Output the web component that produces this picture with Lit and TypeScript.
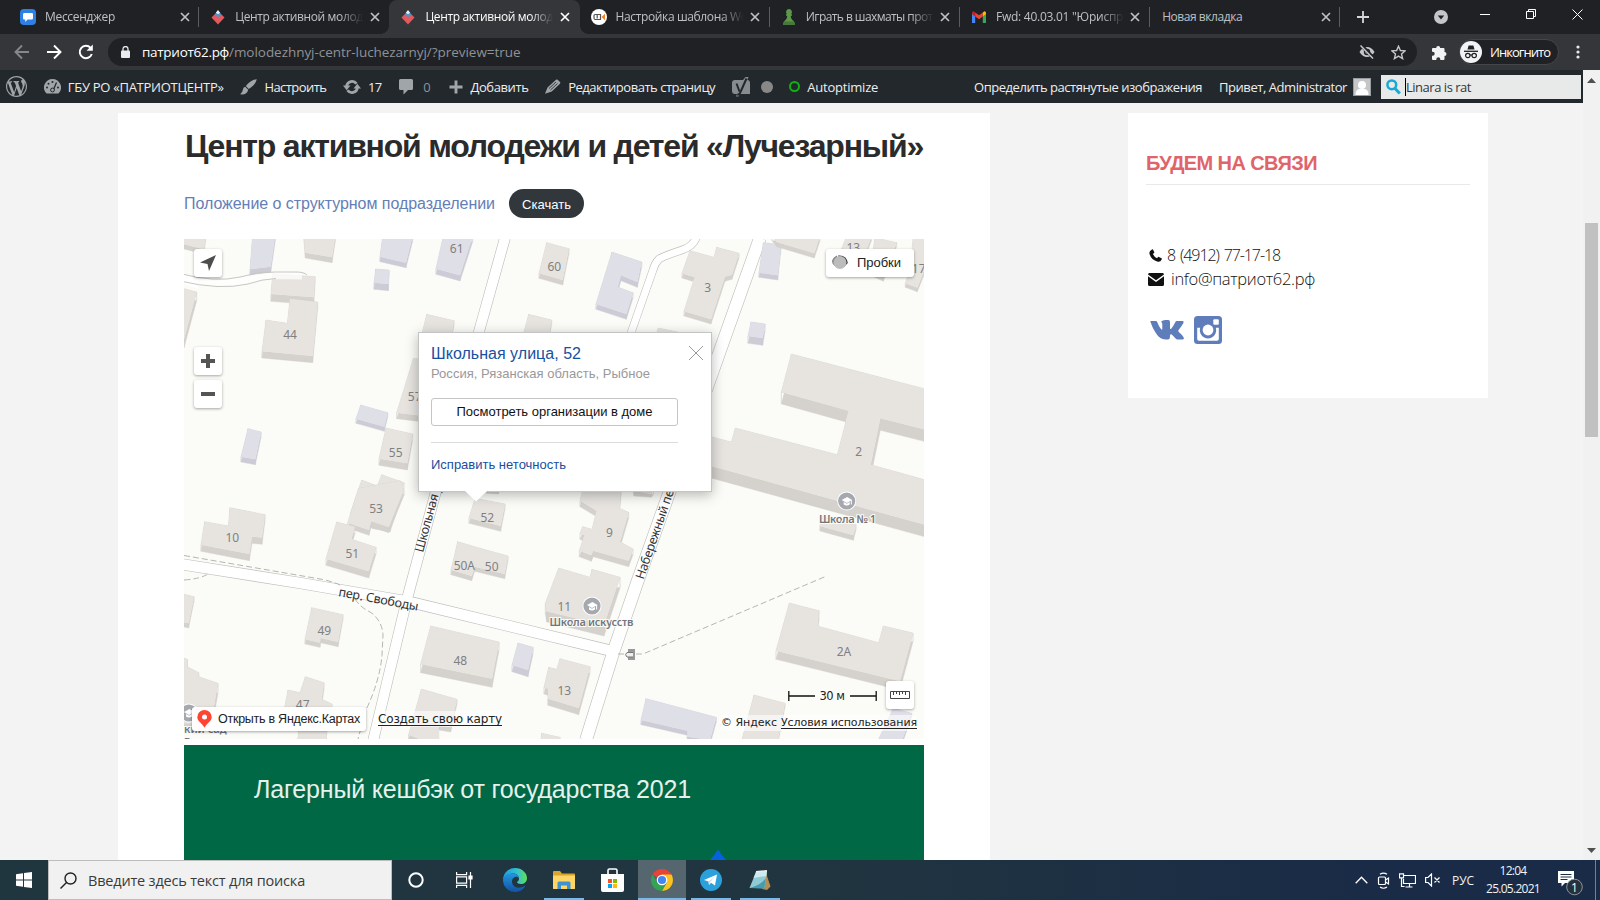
import { LitElement, html, svg, css } from "lit";
import { customElement, property } from "lit/decorators.js";
import { classMap } from "lit/directives/class-map.js";

/** A single line of text whose tracking is adjusted so that it spans a given width. */
@customElement("fit-text")
class FitText extends LitElement {
  @property({ type: Number }) w = 0;
  static styles = css`
    :host { display: inline-block; white-space: nowrap; flex: none; }
    span { display: inline-block; text-decoration: inherit; text-underline-offset: inherit; }
  `;
  render() {
    return html`<span><slot></slot></span>`;
  }
  firstUpdated() {
    const span = this.renderRoot.querySelector("span") as HTMLElement;
    const natural = span.getBoundingClientRect().width;
    const count = (this.textContent || "").trim().length || 1;
    if (this.w) {
      span.style.letterSpacing = `${(this.w - natural) / count}px`;
      this.style.width = `${this.w}px`;
    }
  }
}

/* ---------- browser tabs ---------- */
const closeX = html`<svg class="x" width="10" height="10" viewBox="0 0 10 10"><path d="M1 1L9 9M9 1L1 9" stroke="currentColor" stroke-width="1.7" /></svg>`;

const favChat = html`<svg width="16" height="16" viewBox="0 0 16 16"><rect width="16" height="16" rx="4" fill="#2f80e4"/><path d="M4.5 4h7.2q1.3 0 1.3 1.3v4q0 1.3-1.3 1.3H7.5L5.3 13v-2.4H4.4Q3 10.600 3 9.300v-4Q3 4 4.500 4z" fill="#fff"/></svg>`;
const favPatriot = html`<svg width="16" height="16" viewBox="0 0 16 16"><path d="M1.500 8.500L8 2l6.500 6.500L8 15.500z" fill="#e25a60"/><path d="M4.700 5.500L8 2l3.300 3.500L8 8.300z" fill="#4f93c8"/><path d="M5.800 3.800L8 1l2.200 2.800L8 5.300z" fill="#dfeffa"/></svg>`;
const favCm = html`<svg width="16" height="16" viewBox="0 0 16 16"><circle cx="8" cy="8" r="8" fill="#fff"/><path d="M6.500 5.500H4.200Q3 5.500 3 7v2q0 1.500 1.200 1.500h5.300v-5H6.200v4" fill="none" stroke="#555" stroke-width="1.200"/><path d="M10.500 8L14 4.800v6.400z" fill="#f5821f"/></svg>`;
const favPawn = html`<svg width="16" height="16" viewBox="0 0 16 16"><path d="M8 0a3 3 0 0 1 2 5.200h1v1.500H9.800c0 2 .6 3.300 2.700 5.300 1.200 1.200 1.300 2.500 1.300 4H2.200c0-1.500.1-2.800 1.300-4 2.100-2 2.700-3.300 2.700-5.300H5V5.200h1A3 3 0 0 1 8 0z" fill="#5d9948"/><path d="M2.200 16c0-1.500.1-2.500 1-3.600h9.600c.9 1.100 1 2.100 1 3.600z" fill="#46793a"/></svg>`;
const favGmail = html`<svg width="16" height="16" viewBox="0 0 16 16"><path d="M1 14V4.500L4.200 7v7z" fill="#4285f4"/><path d="M11.800 14V7L15 4.500V14z" fill="#34a853"/><path d="M1 5V3.800Q1 2.200 2.600 2.200L4.200 3.400V7.400z" fill="#c5221f"/><path d="M4.200 3.400L8 6.300l3.800-2.900v4L8 10.300 4.200 7.400z" fill="#ea4335"/><path d="M11.800 3.400l1.600-1.200Q15 2.200 15 3.800V5l-3.200 2.400z" fill="#fbbc04"/></svg>`;

const tabs = [
  { icon: favChat, text: "Мессенджер", w: 70 },
  { icon: favPatriot, text: "Центр активной молоде", w: 134 },
  { icon: favPatriot, text: "Центр активной молоде", w: 134, active: true },
  { icon: favCm, text: "Настройка шаблона Wo", w: 132 },
  { icon: favPawn, text: "Играть в шахматы проти", w: 134 },
  { icon: favGmail, text: 'Fwd: 40.03.01 "Юриспру', w: 133 },
  { icon: null, text: "Новая вкладка", w: 80 },
];

/* ---------- admin bar icons ---------- */
const G = "#a0a5aa";
const icWp = html`<svg width="21" height="21" viewBox="0 0 20 20"><path fill=${G} d="M20 10c0-5.510-4.490-10-10-10S0 4.490 0 10s4.490 10 10 10 10-4.490 10-10zM7.780 15.370L4.370 6.220c.55-.02 1.170-.08 1.170-.08.500-.06.440-1.130-.06-1.110 0 0-1.450.11-2.370.11-.18 0-.37 0-.58-.01C4.120 2.690 6.870 1.110 10 1.110c2.330 0 4.450.87 6.050 2.340-.68-.11-1.650.39-1.650 1.580 0 .740.450 1.360.9 2.100.35.610.550 1.360.550 2.460 0 1.490-1.400 5-1.400 5l-3.030-8.370c.540-.02.820-.170.820-.170.5-.05.440-1.250-.06-1.220 0 0-1.440.12-2.380.12-.87 0-2.330-.12-2.330-.12-.5-.03-.56 1.200-.06 1.220l.92.080 1.260 3.410zM17.410 10c.240-.640.740-1.870.430-4.250.7 1.290 1.050 2.710 1.050 4.250 0 3.290-1.730 6.240-4.400 7.780.970-2.590 1.940-5.200 2.920-7.780zM6.100 18.090C3.120 16.650 1.110 13.530 1.110 10c0-1.300.230-2.480.720-3.590C3.250 10.300 4.670 14.200 6.100 18.090zm4.030-6.630l2.580 6.980c-.86.290-1.760.45-2.710.45-.790 0-1.570-.110-2.290-.330.81-2.380 1.620-4.740 2.420-7.100z"/></svg>`;
const icDash = html`<svg width="17" height="15" viewBox="0 0 17 15"><path fill=${G} d="M8.500 0A8.500 8.500 0 0 0 1.700 13.600Q2.200 14.500 3 14.500h11q.8 0 1.300-.9A8.500 8.500 0 0 0 8.500 0z"/><g fill="#23282d"><circle cx="8.500" cy="3" r="1"/><circle cx="4.500" cy="4.700" r="1"/><circle cx="3" cy="8.500" r="1"/><circle cx="14" cy="8.500" r="1"/></g><path d="M12.500 3.500L9.500 10.500" stroke="#23282d" stroke-width="1.300"/><circle cx="8.500" cy="11" r="1.900" fill=${G} stroke="#23282d"/></svg>`;
const icBrush = html`<svg width="17" height="16" viewBox="0 0 17 16"><path fill=${G} d="M16.800.2Q10.500 1.200 5.800 7l3 3Q15.500 6 16.800.2zM5.200 7.700Q3 8.300 2.800 11 2.500 13.600.2 15.300q6.800.8 8-4.600z"/></svg>`;
const icUpdate = html`<svg width="18" height="14" viewBox="0 0 18 14"><path d="M3.600 6A5.500 5.500 0 0 1 13.500 3.800M14.400 8A5.500 5.500 0 0 1 4.500 10.200" fill="none" stroke=${G} stroke-width="2.800"/><path fill=${G} d="M0 5.500h7.500L3.700 10.200zM10.500 8.500H18l-3.700-4.700z"/></svg>`;
const icComment = html`<svg width="14" height="16" viewBox="0 0 14 16"><path fill=${G} d="M1.500 0h11Q14 0 14 1.500v8q0 1.500-1.500 1.500H9L4.500 15.500V11h-3Q0 11 0 9.500v-8Q0 0 1.500 0z"/></svg>`;
const icPlus = html`<svg width="14" height="14" viewBox="0 0 14 14"><path d="M7 .500v13M.5 7h13" stroke=${G} stroke-width="2.900"/></svg>`;
const icPencil = html`<svg width="16" height="15" viewBox="0 0 16 15"><path fill=${G} d="M11 .8q.8-.8 1.700 0l2.300 2.200q.8.8 0 1.700L6.700 12.500 0 14.700 2.500 8.500z"/><path d="M4 9.500L11 3M5.500 11l7-6.500" stroke="#23282d" stroke-width=".8"/></svg>`;
const icYoast = html`<svg width="18" height="20" viewBox="0 0 18 20"><path fill=${G} opacity=".8" d="M3 3h8l2.500-3h3l-1.200 3H15q3 0 3 3v11H7.800L6.500 19.500H4L5 17H3q-3 0-3-3V6q0-3 3-3z"/><path d="M4.500 6.500l3 8M14.500 1.500L8.500 15q-1 2.700-3.300 2.700" fill="none" stroke="#23282d" stroke-width="2"/></svg>`;

/* ---------- map ---------- */
type Pt = [number, number];
const frames: Record<string, Pt> = { a: [180, 236], b: [550, 236], c: [180, 490], d: [550, 490] };
interface Building { f: string; p: string; h: number; blue?: boolean }
const B = (f: string, p: string, h: number, blue = false): Building => ({ f, p, h, blue });

const buildings: Building[] = [
  B("a", "0,-10 78,-10 72,40 0,22", 14),
  B("a", "218,-5 286,-5 272,92 210,100", 18, true),
  B("a", "372,0 466,0 456,64 376,50", 16),
  B("a", "608,0 698,0 678,80 600,62", 15, true),
  B("a", "587,99 627,102 625,144 582,140", 20, true),
  B("a", "790,0 878,0 840,118 768,98", 17, true),
  B("a", "278,113 405,122 401,184 273,174", 22),
  B("a", "330,188 413,198 398,360 246,346 258,252 322,262", 20),
  B("a", "0,155 50,168 12,310 0,310", 26),
  B("a", "740,235 822,254 810,330 722,310", 14),
  B("a", "1046,235 1115,252 1100,330 1026,310", 14),
  B("b", "-10,20 57,38 38,132 -33,112", 15),
  B("b", "186,48 275,78 262,138 213,118 203,153 249,170 229,234 138,204", 16, true),
  B("b", "420,44 492,64 500,34 567,52 546,116 525,122 483,250 402,226 434,124 396,112", 14),
  B("b", "325,276 400,292 385,330 310,320", 12),
  B("b", "640,20 693,26 683,118 627,110", 14, true),
  B("b", "666,0 810,0 793,52 680,18", 14),
  B("b", "890,0 965,0 950,40 875,38", 12),
  B("b", "975,5 1040,20 1000,124 960,105", 12),
  B("b", "1090,0 1130,0 1120,110 1102,155 1066,142 1080,100", 12),
  B("b", "603,258 645,264 638,306 594,300", 22, true),
  B("b", "724,354 1130,460 1130,582 991,547 962,686 1130,733 1130,868 483,690 483,602 544,618 556,576 862,656 896,524 694,468", 36),
  B("a", "700,368 750,368 730,540 650,530", 18),
  B("a", "542,507 623,530 613,572 528,548", 14, true),
  B("a", "618,576 698,594 682,682 597,668", 20),
  B("a", "204,578 243,588 226,670 183,662", 16, true),
  B("a", "605,716 672,740 630,870 580,860 512,830 545,732 592,750", 18),
  B("c", "150,53 255,74 246,143 216,140 208,192 63,164 74,95 145,108", 20),
  B("c", "536,-5 660,-28 672,0 626,112 574,94 567,120 503,98", 16),
  B("c", "470,96 525,110 514,148 588,172 566,244 438,206", 20),
  B("c", "885,25 975,42 962,108 867,84", 16),
  B("c", "920,-22 960,-18 955,0 920,-2", 12),
  B("c", "833,155 890,172 984,198 974,252 884,230 875,258 813,240", 14),
  B("c", "0,310 42,320 26,400 0,394", 14),
  B("c", "395,353 489,374 474,456 422,444 420,458 375,448", 14),
  B("c", "752,408 957,456 936,566 722,522", 26),
  B("c", "1014,459 1059,472 1044,540 996,525", 20, true),
  B("c", "0,500 22,508 22,530 56,548 56,560 114,580 100,660 40,700 0,700", 30),
  B("c", "376,560 432,578 425,628 456,642 450,700 312,660 324,600 360,608", 20),
  B("c", "358,710 440,725 436,770 350,770", 10),
  B("c", "724,597 831,628 812,712 776,706 776,770 686,734", 14),
  B("c", "1085,730 1140,742 1140,780 1080,780", 10),
  B("d", "100,-10 213,0 208,55 236,67 210,155 249,177 236,212 130,182 124,196 88,182 103,136 90,130 98,110 126,118 140,62 90,32", 18),
  B("d", "250,-12 310,0 304,8 252,4", 14),
  B("d", "26,234 120,262 126,238 210,262 162,406 -10,364 -14,340", 32),
  B("d", "812,76 918,104 910,136 810,108", 15),
  B("d", "718,339 807,362 802,408 986,458 1000,408 1089,429 1050,574 678,482", 26),
  B("d", "288,626 499,682 480,750 412,740 412,722 273,690", 14, true),
  B("d", "612,615 705,640 680,770 570,770", 10),
  B("d", "1030,655 1085,670 1050,770 980,760", 10, true),
  B("d", "-4,532 20,538 30,506 120,530 86,654 -6,626 -6,596 -18,592", 20),
];

const labels: [string, number, number, string][] = [
  ["a", 830, 38, "61"], ["a", 330, 296, "44"], ["a", 704, 482, "57"], ["a", 647, 650, "55"],
  ["b", 13, 92, "60"], ["b", 473, 154, "3"], ["b", 910, 34, "13"], ["b", 1106, 98, "17"], ["b", 926, 648, "2"],
  ["c", 157, 144, "10"], ["c", 588, 57, "53"], ["c", 517, 192, "51"], ["c", 922, 82, "52"], ["c", 853, 226, "50А"],
  ["c", 935, 231, "50"], ["c", 433, 423, "49"], ["c", 841, 513, "48"], ["c", 368, 645, "47"],
  ["d", 178, 128, "9"], ["d", 43, 349, "11"], ["d", 882, 486, "2А"], ["d", 43, 601, "13"],
];

const toPts = (b: Building): Pt[] => {
  const [ox, oy] = frames[b.f];
  return b.p.split(" ").map((s) => {
    const [x, y] = s.split(",").map(Number);
    return [ox + x / 3, oy + y / 3] as Pt;
  });
};

const drawBuilding = (b: Building) => {
  const pts = toPts(b);
  const h = b.h / 3;
  const walls = pts
    .map((p, i) => {
      const q = pts[(i + 1) % pts.length];
      return `M${p[0]} ${p[1]}L${q[0]} ${q[1]}L${q[0]} ${q[1] + h}L${p[0]} ${p[1] + h}Z`;
    })
    .join("");
  return svg`<path d=${walls} fill=${b.blue ? "#cdccd6" : "#d5d1cd"} stroke=${b.blue ? "#cdccd6" : "#d5d1cd"} stroke-width=".4"/>
    <polygon points=${pts.map((p) => p.join(",")).join(" ")} fill=${b.blue ? "#dfdfe7" : "#e7e4e0"}/>`;
};

const roads: [string, number][] = [
  ["M505 238L478.700 332.700L406.700 600L373.300 740", 10],
  ["M760 238L711 376L638 580L614 650L586 740", 12],
  ["M180 564L300 583L410 602L612 651", 10.500],
  ["M697 236Q694 246 682 250Q664 256 659 259Q655 263 653 270L625 350", 7],
];

const school = (x: number, y: number) => svg`<circle cx=${x} cy=${y} r="9.500" fill="#fff"/><circle cx=${x} cy=${y} r="8.600" fill="#a5a8ae"/>
  <path d=${`M${x - 5} ${y - 1}l5.500-3 5 3-5.500 3zM${x - 3} ${y + 1}v2.500q3 2 6 0V${y + 1}l-3 1.700z`} fill="#fff"/><path d=${`M${x + 4.600} ${y - 1}v4.500`} stroke="#fff"/>`;

const mapArt = html`<svg class="art" width="740" height="500" viewBox="184 239 740 500">
  <rect x="184" y="239" width="740" height="500" fill="#fbfcf7"/>
  ${roads.map(([d, w]) => svg`<path d=${d} fill="none" stroke="#bdbdbb" stroke-width=${w + 1.200} stroke-linejoin="round"/>`)}
  ${roads.map(([d, w]) => svg`<path d=${d} fill="none" stroke="#fff" stroke-width=${w} stroke-linejoin="round"/>`)}
  <g fill="none" stroke="#b5b5b3" stroke-width="1" stroke-dasharray="6 3">
    <path d="M184 555.500L323 579.500Q334 582 341 585.500"/><path d="M184 580Q200 579 208 574"/>
    <path d="M355 599Q360 607 370 612Q382 620 383 635L382 655Q380 680 366 710L358 739"/>
    <path d="M618 654h25L825 576.700"/>
  </g>
  ${buildings.map(drawBuilding)}
  <path d="M184 275L198 278V289L184 284z" fill="#fff"/>
  <path d="M180 278.500Q220 287 247 280Q262 275.500 280 275.500L302 276" fill="none" stroke="#fff" stroke-opacity=".75" stroke-width="7"/>
  <path d="M180 273.500Q215 283 240 277Q258 271.500 275 272H296Q304 272 307 275M180 281Q220 290.500 248 284Q262 279 276 278.500" fill="none" stroke="#c6c6c3"/>
  <g class="nums">${labels.map(([f, x, y, t]) => svg`<text x=${frames[f][0] + x / 3} y=${frames[f][1] + y / 3 + 4.300} text-anchor="middle">${t}</text>`)}</g>
  ${school(846.700, 501)}${school(592, 606)}${school(189, 713)}
  <text class="poi" x="819" y="522.500" textLength="57">Школа № 1</text>
  <text class="poi" x="549.500" y="625.500" textLength="84">Школа искусств</text>
  <text class="poi" x="184" y="732.500">кий сад</text><text class="poi" x="184" y="743.500">в</text>
  <g class="street">
    <text transform="translate(423 553) rotate(-75)" textLength="78">Школьная ул.</text>
    <text transform="translate(643.500 580) rotate(-71)" textLength="104">Набережный пер.</text>
    <text transform="translate(338 596) rotate(10.500)" textLength="81">пер. Свободы</text>
  </g>
  <rect x="628" y="649" width="7" height="11" fill="#999"/><path d="M633 652.500h-6q-3 2 0 4.500h6" fill="#eee" stroke="#777"/>
</svg>`;

@customElement("app-root")
class AppRoot extends LitElement {
  static styles = css`
    :host { display: flex; flex-direction: column; width: 1600px; height: 900px; overflow: hidden; background: #f3f3f3; font-family: "Open Sans", "Noto Sans", sans-serif; }
    * { box-sizing: border-box; }
    svg { display: block; flex: none; }
    .row { display: flex; align-items: center; }

    .tabs { height: 34px; flex: none; background: #202124; display: flex; padding-left: 9px; font-size: 12px; color: #bdc1c6; }
    .tab { width: 190.200px; height: 34px; display: flex; align-items: center; padding-left: 11px; position: relative; }
    .tab .name { overflow: hidden; width: 128px; margin-left: 9px; line-height: 20px; -webkit-mask-image: linear-gradient(90deg, #000 82%, transparent 100%); }
    .tab.wide .name { width: 152px; margin-left: 1px; -webkit-mask-image: none; }
    .tab .x { margin-left: 6.500px; }
    .tab:not(.active):not(.prev)::after { content: ""; position: absolute; right: 0; top: 7px; width: 1px; height: 20px; background: #5a5c60; }
    .tab.active { background: #35363a; color: #fff; border-radius: 8px 8px 0 0; }
    .tab.active::before, .tab.active::after { content: ""; position: absolute; bottom: 0; width: 8px; height: 8px; }
    .tab.active::before { left: -8px; background: radial-gradient(circle at 0 0, #202124 7.500px, #35363a 8px); }
    .tab.active::after { right: -8px; background: radial-gradient(circle at 100% 0, #202124 7.500px, #35363a 8px); }
    .newtab { margin-left: 16.500px; align-self: center; }
    .drop { margin-left: 65.500px; align-self: center; }
    .min { margin: 14px 0 0 32px; } .restore { margin: 9px 0 0 36px; } .close { margin: 9px 0 0 36px; }

    .toolbar { height: 36px; flex: none; background: #35363a; color: #fff; padding-left: 14px; }
    .fwd { margin-left: 16px; } .reload { margin-left: 16px; }
    .omni { margin-left: 14px; width: 1309px; height: 28px; border-radius: 14px; background: #202124; padding-left: 13px; font-size: 13.500px; }
    .omni .host { margin-left: 12px; } .omni .path { color: #8f9296; }
    .eye { margin-left: 838px; } .star { margin-left: 16px; } .puzzle { margin-left: 15px; }
    .incog { margin-left: 12px; width: 100px; height: 26px; border-radius: 13px; background: #202124; border: 1px solid #44464a; font-size: 13px; }
    .incog fit-text { margin-left: 8px; }
    .dots { margin-left: 17px; }

    .below { height: 790px; display: flex; }
    .page { width: 1583px; }
    .admin { height: 33px; background: #23282d; color: #eee; font-size: 13px; font-weight: 500; padding-left: 6px; }
    .left { gap: 16.700px; width: 968px; }
    .item { gap: 7px; }
    .item.c { gap: 10.500px; margin: 0 2px 0 .5px; } .item .dim { color: #8d9297; }
    .dot { width: 12px; height: 12px; border-radius: 50%; background: #888; margin-left: -6px; }
    .ring { width: 11px; height: 11px; border-radius: 50%; border: 2.500px solid #0eb30e; }
    .admin .hello { margin-left: 17px; }
    .ava { margin-left: 6px; }
    .find { margin-left: 10px; width: 200px; height: 24px; background: #e8eae9; color: #32373c; font-weight: 400; padding-left: 5px; }
    .caret { width: 1px; height: 18px; background: #000; margin-left: 4px; }

    .content { height: 757px; display: flex; align-items: flex-start; padding: 10px 0 0 118px; }
    .sheet { width: 872px; height: 747px; background: #fff; padding: 14px 66px 0; overflow: hidden; font-family: "Liberation Sans", Arial, sans-serif; }
    h1 { margin: 0; font-size: 32px; line-height: 38px; color: #2b2b2b; font-weight: 700; height: 38px; }
    h1 fit-text { margin-left: 1px; }
    .doc { margin-top: 24px; height: 29px; color: #647eb6; font-size: 16px; }
    .btn { margin-left: 14px; height: 29px; width: 75px; border-radius: 15px; background: #32373c; color: #fff; font-size: 13px; justify-content: center; padding-top: 1px; }
    .map { position: relative; margin-top: 21px; width: 740px; height: 500px; overflow: hidden; font-size: 13px; }
    .nums text { font: 12px "Noto Sans"; fill: #808080; }
    .poi { font: 600 11px "Noto Sans"; fill: #73757b; stroke: #fbfcf7; stroke-width: 2px; paint-order: stroke; }
    .street text { font: 12.500px "Noto Sans"; fill: #333; }
    .ctl { position: absolute; background: #fff; border-radius: 3px; box-shadow: 0 1px 3px rgba(0,0,0,.35); display: flex; align-items: center; justify-content: center; width: 28px; height: 28px; }
    .geo { left: 10px; top: 10px; } .zin { left: 10px; top: 108px; } .zout { left: 10px; top: 141px; }
    .traffic { left: 642px; top: 10px; width: 88px; justify-content: flex-start; padding: 0 0 2px 6px; gap: 9px; color: #222; }
    .ruler { left: 702px; top: 442px; }
    .open { left: 8px; top: 468px; width: 174px; height: 24px; justify-content: flex-start; padding: 0 0 1px 5px; gap: 6px; font-size: 12.500px; color: #222; }
    .verd { position: absolute; font-family: "DejaVu Sans", sans-serif; font-size: 12px; line-height: 16px; color: #222; background: rgba(255,255,255,.6); }
    .create { left: 194px; top: 472px; } .copy { left: 537px; top: 476px; display: flex; font-size: 11px; gap: 4px; }
    .u { text-decoration: underline; text-underline-offset: 2px; }
    .scale { position: absolute; left: 603.500px; top: 449px; gap: 5px; font: 11.500px/16px "DejaVu Sans"; color: #222; }
    .balloon { position: absolute; left: 234px; top: 93px; width: 294px; height: 160px; background: #fff; border: 1px solid #c4c4c4; box-shadow: 0 3px 12px rgba(0,0,0,.28); padding: 11px 0 0 12px; line-height: 20px; }
    .balloon .t { font-size: 16px; color: #1750a0; height: 20px; line-height: 20px; }
    .balloon .s { color: #999; height: 20px; line-height: 19px; }
    .balloon .b { margin-top: 14px; width: 247px; height: 28px; border: 1px solid #c5c5c5; border-radius: 3px; display: flex; align-items: center; justify-content: center; color: #111; padding-bottom: 1px; }
    .balloon .l { border-top: 1px solid #dcdcdc; width: 247px; margin-top: 16px; padding-top: 12px; color: #1750a0; }
    .bx { position: absolute; right: 8px; top: 13px; }
    .tail { position: absolute; left: 46px; top: 158px; }
    .banner { position: relative; margin-top: 6px; height: 130px; background: #006845; color: #e6f1ec; font-size: 25px; line-height: 30px; padding: 29px 0 0 70px; }
    .gem { position: absolute; left: 526px; top: 105px; }

    .side { margin-left: 138px; width: 360px; height: 285px; background: #fff; padding: 39px 18px 0; color: #111; }
    h2 { margin: 0; height: 33px; font: 700 20px/23px "Liberation Sans"; color: #e06469; border-bottom: 1px solid #e9e9e9; }
    .ph { margin-top: 58px; height: 24px; padding-left: 3px; font: 300 16px/24px "Open Sans", sans-serif; gap: 5px; word-spacing: 2px; }
    .ph.m { margin-top: 0; padding-left: 2px; gap: 7px; font-size: 16.500px; }
    .soc { margin-top: 23px; gap: 9px; padding-left: 4px; height: 32px; }

    .scroll { width: 17px; background: #f1f1f1; display: flex; flex-direction: column; align-items: center; padding: 8px 0 7px; }
    .thumb { width: 13px; height: 214px; background: #c1c1c1; margin-top: 140px; }
    .dn { margin-top: auto; }

    .task { height: 40px; flex: none; background: linear-gradient(90deg, #20363f 0%, #20353f 50%, #1a2b47 85%); color: #f1f3f5; display: flex; }
    .start { width: 48px; display: flex; align-items: center; justify-content: center; }
    .search { width: 344px; background: #f1f1f1; border: 1px solid #bdbdbd; color: #3a3a3a; font-size: 14.500px; padding-left: 11px; gap: 11px; }
    .app { width: 48px; margin-right: 1px; display: flex; align-items: center; justify-content: center; position: relative; }
    .app.tv { padding-right: 2px; margin-right: 1.500px; }
    .app.run::after { content: ""; position: absolute; left: 4px; right: 4px; bottom: 0; height: 2.500px; background: #76b9ed; }
    .app.on { background: #55666f; } .app.on::after { left: 0; right: 0; }
    .tray { margin-left: auto; gap: 9px; font-size: 12px; padding-right: 20px; }
    .lang { margin-left: 3px; } .clock { line-height: 18px; text-align: center; margin-left: 3px; width: 54px; display: flex; flex-direction: column; align-items: center; }
    .note { margin: 5px -9px 0 9px; }
    .edge { border-left: 1px solid #76808f; width: 5px; }
  `;

  render() {
    return html`${this.tabStrip()}${this.toolbar()}
      <div class="below">
        <div class="page">${this.adminBar()}
          <div class="content">${this.sheet()}${this.sidebar()}</div>
        </div>
        <div class="scroll">
          <svg width="9" height="5" viewBox="0 0 9 5"><path d="M0 5L4.500 0 9 5z" fill="#505050"/></svg>
          <div class="thumb"></div>
          <svg class="dn" width="9" height="5" viewBox="0 0 9 5"><path d="M0 0h9L4.500 5z" fill="#505050"/></svg>
        </div>
      </div>
      ${this.taskbar()}`;
  }

  tabStrip() {
    return html`<div class="tabs">
      ${tabs.map((t, i) => html`<div class=${classMap({ tab: true, active: !!t.active, prev: i === 1, wide: !t.icon })}>
        ${t.icon}<div class="name"><fit-text w=${t.w}>${t.text}</fit-text></div>${closeX}</div>`)}
      <svg class="newtab" width="12" height="12" viewBox="0 0 12 12"><path d="M6 0v12M0 6h12" stroke="#d5d7da" stroke-width="1.800"/></svg>
      <svg class="drop" width="14" height="14" viewBox="0 0 14 14"><circle cx="7" cy="7" r="7" fill="#c3c6ca"/><path d="M3.800 5.500h6.400L7 9.500z" fill="#202124"/></svg>
      <svg class="min" width="10" height="2"><path d="M0 .500h10" stroke="#fff"/></svg>
      <svg class="restore" width="10" height="10" viewBox="0 0 10 10" fill="none" stroke="#fff"><path d="M.5 2.500h7v7h-7zM2.500 2.500v-2h7v7h-2"/></svg>
      <svg class="close" width="11" height="11" viewBox="0 0 11 11"><path d="M.5.5l10 10M10.500.5l-10 10" stroke="#fff"/></svg>
    </div>`;
  }

  toolbar() {
    return html`<div class="toolbar row">
      <svg width="16" height="16" viewBox="0 0 16 16" fill="none" stroke="#85878b" stroke-width="1.900"><path d="M15 8H2M8 1.500L1.500 8 8 14.500"/></svg>
      <svg class="fwd" width="16" height="16" viewBox="0 0 16 16" fill="none" stroke="#fff" stroke-width="1.900"><path d="M1 8h13M8 1.500L14.500 8 8 14.500"/></svg>
      <svg class="reload" width="16" height="16" viewBox="0 0 16 16"><path d="M13.800 10A6.200 6.200 0 1 1 12.600 3.800" fill="none" stroke="#fff" stroke-width="2"/><path d="M14.800.5v6.300H8.500z" fill="#fff"/></svg>
      <div class="omni row">
        <svg width="9" height="12" viewBox="0 0 9 12"><rect y="4.500" width="9" height="7.500" rx="1" fill="#e8eaed"/><path d="M2 5V3a2.500 2.500 0 0 1 5 0v2" fill="none" stroke="#e8eaed" stroke-width="1.300"/></svg>
        <fit-text class="host" w="87">патриот62.рф</fit-text><fit-text class="path" w="291.500">/molodezhnyj-centr-luchezarnyj/?preview=true</fit-text>
        <svg class="eye" width="16" height="14" viewBox="0 0 16 14"><path d="M.5 7Q3.500 2 8 2t7.500 5Q12.500 12 8 12T.5 7z" fill="#c4c7ca"/><circle cx="8" cy="7" r="3.200" fill="#202124"/><circle cx="8" cy="7" r="1.800" fill="#c4c7ca"/><path d="M2 0l12.500 13" stroke="#202124" stroke-width="3.500"/><path d="M1.500.5l12.500 13" stroke="#c4c7ca" stroke-width="1.500"/></svg>
        <svg class="star" width="15" height="15" viewBox="0 0 15 15"><path d="M7.500 1.200l1.900 4.300 4.600.4-3.500 3.100 1.100 4.600-4.100-2.500-4.100 2.500 1.100-4.600L1 5.900l4.600-.4z" fill="none" stroke="#c4c7ca" stroke-width="1.400"/></svg>
      </div>
      <svg class="puzzle" width="15" height="15" viewBox="0 0 15 15"><path d="M4.200 3a2 2 0 0 1 4 0h3.300q1 0 1 1v3a2 2 0 0 1 0 4v3q0 1-1 1H8.300v-.8a2 2 0 0 0-4 0V15H1q-1 0-1-1v-3.200h.7a2 2 0 0 0 0-4H0V4q0-1 1-1z" fill="#f1f3f4"/></svg>
      <div class="incog row">
        <svg width="22" height="22" viewBox="0 0 22 22"><circle cx="11" cy="11" r="11" fill="#f1f3f4"/><path d="M7.500 8.500L8.600 4.600h4.800l1.100 3.900z" fill="#202124"/><path d="M4 10.300h14" stroke="#202124" stroke-width="1.300"/><g fill="none" stroke="#202124" stroke-width="1.200"><circle cx="7.800" cy="14.500" r="2.200"/><circle cx="14.200" cy="14.500" r="2.200"/><path d="M10 14.300q1-.7 2 0"/></g></svg>
        <fit-text w="60">Инкогнито</fit-text>
      </div>
      <svg class="dots" width="4" height="14" viewBox="0 0 4 14" fill="#e8eaed"><circle cx="2" cy="2" r="1.600"/><circle cx="2" cy="7" r="1.600"/><circle cx="2" cy="12" r="1.600"/></svg>
    </div>`;
  }

  adminBar() {
    const item = (icon: unknown, w: number, text: string) => html`<div class="item row">${icon}<fit-text w=${w}>${text}</fit-text></div>`;
    return html`<div class="admin row">
      <div class="left row">
        ${icWp}${item(icDash, 156, "ГБУ РО «ПАТРИОТЦЕНТР»")}${item(icBrush, 62, "Настроить")}${item(icUpdate, 13.500, "17")}
        <div class="item c row">${icComment}<fit-text class="dim" w="7.500">0</fit-text></div>
        ${item(icPlus, 58, "Добавить")}${item(icPencil, 147, "Редактировать страницу")}${icYoast}
        <div class="dot"></div>
        <div class="item row"><div class="ring"></div><fit-text w="71">Autoptimize</fit-text></div>
      </div>
      <fit-text w="228">Определить растянутые изображения</fit-text>
      <fit-text class="hello" w="128">Привет, Administrator</fit-text>
      <svg class="ava" width="18" height="18" viewBox="0 0 18 18"><rect width="18" height="18" fill="#c4c6c8"/><circle cx="9" cy="7" r="4" fill="#fff"/><path d="M2.500 17q0-5.500 4-6h5q4 .5 4 6z" fill="#fff"/><rect x=".5" y=".5" width="17" height="17" fill="none" stroke="#9a9da0"/></svg>
      <div class="find row">
        <svg width="15" height="16" viewBox="0 0 15 16"><circle cx="5.800" cy="5.800" r="4.400" fill="none" stroke="#1ba8d5" stroke-width="2.500"/><path d="M8.800 9.200l5 5.300" stroke="#1ba8d5" stroke-width="3"/></svg>
        <div class="caret"></div><fit-text w="65">Linara is rat</fit-text>
      </div>
    </div>`;
  }

  sheet() {
    return html`<div class="sheet">
      <h1><fit-text w="738">Центр активной молодежи и детей «Лучезарный»</fit-text></h1>
      <div class="doc row"><fit-text w="311">Положение о структурном подразделении</fit-text>
        <div class="btn row"><fit-text w="49">Скачать</fit-text></div></div>
      <div class="map">${mapArt}
        <div class="ctl geo"><svg width="16" height="16" viewBox="0 0 16 16"><path d="M0 7.500L16 0 9 16 7.500 9z" fill="#4d4d4d"/></svg></div>
        <div class="ctl zin"><svg width="14" height="14" viewBox="0 0 14 14"><path d="M7 0v14M0 7h14" stroke="#555" stroke-width="4"/></svg></div>
        <div class="ctl zout"><svg width="14" height="14" viewBox="0 0 14 14"><path d="M0 7h14" stroke="#555" stroke-width="4"/></svg></div>
        <div class="ctl traffic"><svg width="16" height="14" viewBox="0 0 16 14"><path d="M6 .500Q14.500-.5 15.800 8L12 12z" fill="#333"/><path d="M0 6Q1 2 5 .5V12Q0 10 0 6z" fill="#888"/><circle cx="8" cy="7.500" r="6.500" fill="#bcbcbc"/></svg><fit-text w="44">Пробки</fit-text></div>
        <div class="ctl ruler"><svg width="20" height="8" viewBox="0 0 20 8" fill="none" stroke="#444"><path d="M.5.5h19v7h-19zM3.500 1v3M6.500 1v2M9.500 1v3M12.500 1v2M15.500 1v3"/></svg></div>
        <div class="ctl open"><svg width="15" height="18" viewBox="0 0 15 18"><path d="M7.500 0a7.200 7.200 0 0 1 7.200 7.200c0 4.300-5 5.800-7.200 10.600C5.300 13 .3 11.500.3 7.200A7.200 7.200 0 0 1 7.500 0z" fill="#f43"/><circle cx="7.500" cy="7" r="2.500" fill="#fff"/></svg><fit-text w="142">Открыть в Яндекс.Картах</fit-text></div>
        <div class="verd create"><fit-text class="u" w="124">Создать свою карту</fit-text></div>
        <div class="scale row">
          <svg width="27" height="10" viewBox="0 0 27 10"><path d="M.8 0v10M.8 5H27" stroke="#111" stroke-width="1.300"/></svg><fit-text w="25">30 м</fit-text>
          <svg width="27" height="10" viewBox="0 0 27 10"><path d="M26.200 0v10M0 5h26" stroke="#111" stroke-width="1.300"/></svg></div>
        <div class="verd copy"><fit-text w="56">© Яндекс</fit-text><fit-text class="u" w="136">Условия использования</fit-text></div>
        <div class="balloon">
          <div class="t"><fit-text w="150">Школьная улица, 52</fit-text></div>
          <div class="s"><fit-text w="219">Россия, Рязанская область, Рыбное</fit-text></div>
          <div class="b"><fit-text w="196">Посмотреть организации в доме</fit-text></div>
          <div class="l"><fit-text w="135">Исправить неточность</fit-text></div>
          <svg class="bx" width="14" height="14" viewBox="0 0 14 14"><path d="M0 0l14 14M14 0L0 14" stroke="#999"/></svg>
          <svg class="tail" width="22" height="11" viewBox="0 0 22 11"><path d="M0 0h22L11 10.500z" fill="#fff"/></svg>
        </div>
      </div>
      <div class="banner"><fit-text w="437">Лагерный кешбэк от государства 2021</fit-text>
        <svg class="gem" width="16" height="10" viewBox="0 0 16 10"><path d="M8 0q2 1 3 4l5 6H0l5-6q1-3 3-4z" fill="#0563e0"/></svg></div>
    </div>`;
  }

  sidebar() {
    return html`<div class="side">
      <h2><fit-text w="171">БУДЕМ НА СВЯЗИ</fit-text></h2>
      <div class="ph row"><svg width="13" height="13" viewBox="0 0 13 13"><path d="M3 .4q.6-.5 1 .2l1.300 2.600q.2.500-.3.900L3.900 5q1.400 3 4.200 4.200L9 8.100q.4-.5.9-.2l2.600 1.300q.6.300.3 1-1.300 3-4 2.500Q1.800 11 .4 4.200.2 1.600 3 .4z" fill="#111"/></svg><fit-text w="113">8 (4912) 77-17-18</fit-text></div>
      <div class="ph m row"><svg width="16" height="13" viewBox="0 0 16 13"><path d="M1.500 0h13Q16 0 16 1.500L8 7.300 0 1.500Q0 0 1.500 0zM0 3.300l8 5.800 8-5.800v8.200q0 1.500-1.500 1.500h-13Q0 13 0 11.500z" fill="#111"/></svg><fit-text w="144">info@патриот62.рф</fit-text></div>
      <div class="soc row">
        <svg width="35" height="20" viewBox="0 0 35 20"><path d="M.3 1.500Q0 1 1 1h5q.8 0 1.200.9Q9.500 7.500 11.300 9.300q1 .9 1-.5V4.200q0-2-1.300-2.500Q12.500 0 15.500 0h2.800q1.700.2 1.700 2v6q0 1.800 1.200.7Q23.500 6 25.400 2q.4-1 1.400-1h5.700q1.700 0 1.100 1.500-1 2.300-5 7.500-.8 1 .2 2 4.200 3.900 5 5.700.6 1.700-1.200 1.700h-5q-1.200 0-2-.9l-2.800-3Q20.500 13 20 15.500q0 1.500-.3 3.100-.3.800-1.500.8h-2Q9.800 19.800 5.500 12.500 2.500 8 .3 1.500z" fill="#5f7cbb"/></svg>
        <svg width="28" height="28" viewBox="0 0 28 28"><rect width="28" height="28" rx="3.500" fill="#5f7cbb"/><path d="M3.200 11.700h3A8.200 8.200 0 1 0 21.800 11.700h3V23q0 1.700-1.700 1.700H4.900Q3.200 24.700 3.200 23z" fill="#fff"/><circle cx="14" cy="14" r="5.400" fill="#fff"/><rect x="19.300" y="3.300" width="5.500" height="5.500" rx="1" fill="#fff"/></svg>
      </div>
    </div>`;
  }

  taskbar() {
    return html`<div class="task">
      <div class="start"><svg width="16" height="16" viewBox="0 0 16 16" fill="#fff"><path d="M0 2.200l7-1v6.300H0zM8 1l8-1v7.500H8zM0 8.500h7v6.300l-7-1zM8 8.500h8V16l-8-1z"/></svg></div>
      <div class="search row"><svg width="17" height="17" viewBox="0 0 17 17" fill="none" stroke="#222" stroke-width="1.400"><circle cx="10.500" cy="6.500" r="5.500"/><path d="M6.500 10.500L.5 16.500"/></svg><fit-text w="217">Введите здесь текст для поиска</fit-text></div>
      <div class="app"><svg width="16" height="16" viewBox="0 0 16 16"><circle cx="8" cy="8" r="6.700" fill="none" stroke="#fff" stroke-width="2"/></svg></div>
      <div class="app tv"><svg width="17" height="16" viewBox="0 0 17 16" fill="none" stroke="#fff" stroke-width="1.200"><path d="M.6 0v2.600h10V0M.6 16v-2.600h10V16M.6 4.800h10v6.400H.6zM14.500 0v16"/><path d="M13 4h3v3h-3z" fill="#fff"/></svg></div>
      <div class="app"><svg width="24" height="24" viewBox="0 0 24 24"><defs><linearGradient id="e1" x1="0" x2="1"><stop offset="0" stop-color="#1b9de2"/><stop offset=".6" stop-color="#35c1d0"/><stop offset="1" stop-color="#5fe055"/></linearGradient><linearGradient id="e2" x1="0" y1="0" x2="0" y2="1"><stop offset="0" stop-color="#2396dc"/><stop offset="1" stop-color="#1352a3"/></linearGradient></defs><path d="M0 12A12 12 0 0 1 12 0c7 0 12 5 12 10 0 4-3 6-6 6-2.500 0-4-1-4-2 1.500-1 2-2 2-3.500C16 7 12 5 9 5.500 4 6 1 9 0 12z" fill="url(#e1)"/><path d="M0 12C1 7 5 5.500 9 5.500c4 0 7 2 7 5-1-1.500-2.500-2-4-1.500-3 1-4 5-2 8 2.500 3.500 7.500 3.500 12.500.5C20 22 16.500 24 12 24A12 12 0 0 1 0 12z" fill="url(#e2)"/></svg></div>
      <div class="app run"><svg width="22" height="18" viewBox="0 0 22 18"><path d="M0 1q0-1 1-1h6l2 2.500h12q1 0 1 1V18H0z" fill="#d9a52b"/><path d="M0 4.500h22V17q0 1-1 1H1q-1 0-1-1z" fill="#fcd667"/><path d="M4.500 18v-6q0-1.500 1.500-1.500h10q1.500 0 1.500 1.500v6H14v-3.500H8V18z" fill="#3f91d0"/></svg></div>
      <div class="app"><svg width="23" height="24" viewBox="0 0 23 24"><path d="M7 7V2.500Q7 1 8.500 1h6Q16 1 16 2.500V7" fill="none" stroke="#fff" stroke-width="1.600"/><path d="M0 6h23v16q0 2-2 2H2q-2 0-2-2z" fill="#fff"/><path d="M7 11h4v4H7z" fill="#f35325"/><path d="M12 11h4v4h-4z" fill="#81bc06"/><path d="M7 16h4v4H7z" fill="#05a6f0"/><path d="M12 16h4v4h-4z" fill="#ffba08"/></svg></div>
      <div class="app run on"><svg width="22" height="22" viewBox="0 0 22 22"><path d="M11 11L1.500 5.500A11 11 0 0 1 20.500 5.500z" fill="#e94335"/><path d="M11 11V5.500h9.500A11 11 0 0 1 11 22l4.500-8.500z" fill="#fcc31e"/><path d="M11 11l4.700 2.700L11 22A11 11 0 0 1 1.500 5.500L6.300 13.700z" fill="#33a452"/><circle cx="11" cy="11" r="5.300" fill="#fff"/><circle cx="11" cy="11" r="4.100" fill="#4386f2"/></svg></div>
      <div class="app run"><svg width="22" height="22" viewBox="0 0 22 22"><circle cx="11" cy="11" r="11" fill="#2ba0da"/><path d="M4 11L17 5.500 15 16.500 11 13.700 9 16 8.500 12.500z" fill="#fff"/><path d="M8.500 12.500L15 7.500 10 13.200 9 16z" fill="#c2dcec"/></svg></div>
      <div class="app run"><svg width="22" height="21" viewBox="0 0 22 21"><path d="M17 3l4.500 13.500L18 20l-5-1z" fill="#b58f51"/><path d="M7 2l11-1-2.500 17L.5 18z" fill="#8fcbd5"/><path d="M7 2l11-1-.6 5L4.500 8z" fill="#cdeaee"/><path d="M.5 18l14.800.8L17 8q-4 6-16.500 10z" fill="#4a9bae"/><path d="M7 1.800l11-1" stroke="#eee" stroke-width="1.500"/></svg></div>
      <div class="tray row">
        <svg width="13" height="8" viewBox="0 0 13 8"><path d="M.7 7.300L6.500 1.300l5.800 6" fill="none" stroke="#fff" stroke-width="1.300"/></svg>
        <svg width="13" height="17" viewBox="0 0 13 17" fill="none" stroke="#fff" stroke-width="1.200"><rect x="1.500" y="5" width="7" height="7.500" rx="1"/><path d="M8.500 8l3-2v6l-3-2M3 2.300q3.500-2.500 7 0M3 15q3.500 2.500 7 0"/></svg>
        <svg width="17" height="15" viewBox="0 0 17 15" fill="none" stroke="#fff" stroke-width="1.200"><path d="M4.500 2.500h12v8h-12V6M10.500 10.500v3M6.500 14h7M.5.800h4v4h-4zM2.500 5v8.500h3"/></svg>
        <svg width="15" height="14" viewBox="0 0 15 14" fill="none" stroke="#fff" stroke-width="1.200"><path d="M.6 4.500H3l3.500-3.500v12L3 9.500H.6zM9.500 4.500l5 5M14.500 4.500l-5 5"/></svg>
        <fit-text class="lang" w="22">РУС</fit-text>
        <div class="clock"><fit-text w="27">12:04</fit-text><fit-text w="54">25.05.2021</fit-text></div>
        <svg class="note" width="26" height="26" viewBox="0 0 26 26"><path d="M0 1h16v12H7l-3.500 3.500V13H0z" fill="#fff"/><path d="M2.500 4.500h11M2.500 7h11M2.500 9.500h7" stroke="#1b2c45"/><circle cx="16.500" cy="17" r="7.800" fill="#26313c" stroke="#8c949c"/><text x="16.500" y="21.500" text-anchor="middle" font-size="12" fill="#fff">1</text></svg>
      </div>
      <div class="edge"></div>
    </div>`;
  }
}
